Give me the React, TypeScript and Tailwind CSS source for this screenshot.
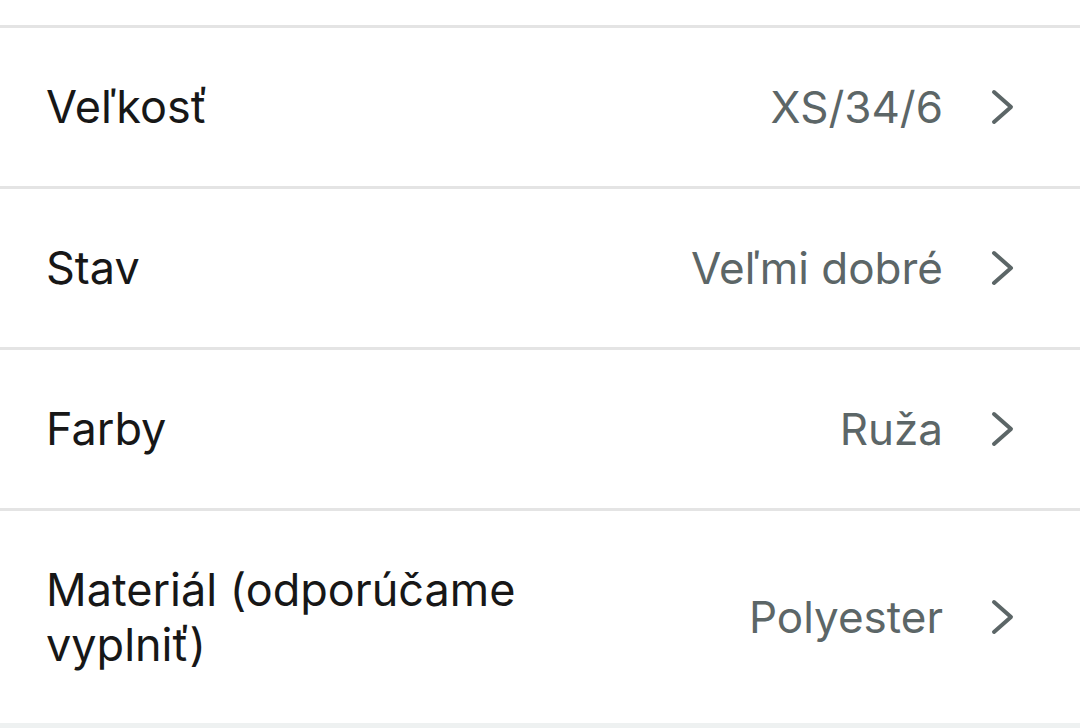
import React from "react";

const Chevron = () => (
  <svg width="24" height="40" viewBox="0 0 24 40" className="shrink-0 ml-[47px]" fill="none">
    <polyline points="4,5 21,20 4,35" stroke="#5c6667" strokeWidth="4" strokeLinecap="round" strokeLinejoin="round" />
  </svg>
);

const Row = ({ label, value }: { label: string; value: string }) => (
  <div className="flex items-center justify-between pl-[46px] pr-[66px] border-b-[3px] border-[#e4e4e4] h-[161px] shrink-0">
    <div className="text-[45px] leading-[54px] text-[#171717] max-w-[480px]">{label}</div>
    <div className="flex items-center">
      <span className="text-[44px] leading-[54px] text-[#5c6667] whitespace-nowrap">{value}</span>
      <Chevron />
    </div>
  </div>
);

export default function App() {
  return (
    <div
      className="w-[1080px] h-[728px] bg-white overflow-hidden flex flex-col"
      style={{ fontFamily: "Inter, 'Noto Sans', sans-serif" }}
    >
      <div className="h-[28px] shrink-0 border-b-[3px] border-[#e4e4e4]" />
      <Row label="Veľkosť" value="XS/34/6" />
      <Row label="Stav" value="Veľmi dobré" />
      <Row label="Farby" value="Ruža" />
      <div className="flex items-center justify-between pl-[46px] pr-[66px] h-[212px] shrink-0">
        <div className="text-[45px] leading-[55px] text-[#171717] max-w-[480px]">Materiál (odporúčame vyplniť)</div>
        <div className="flex items-center">
          <span className="text-[44px] leading-[54px] text-[#5c6667] whitespace-nowrap">Polyester</span>
          <Chevron />
        </div>
      </div>
      <div className="flex-1 bg-[#eef1f1]" />
    </div>
  );
}
